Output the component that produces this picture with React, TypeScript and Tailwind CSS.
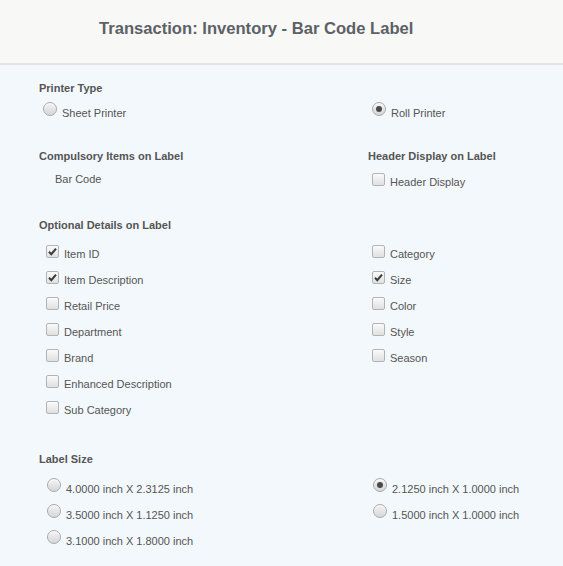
import React from 'react'

function Radio({ checked }: { checked?: boolean }) {
  return (
    <span className="flex h-[14px] w-[14px] shrink-0 items-center justify-center rounded-full border border-[#a9a9a9] bg-gradient-to-b from-[#f4f4f4] to-[#d6d6d6] shadow-[inset_0_1px_1px_rgba(255,255,255,0.8)]">
      {checked && <span className="h-[6px] w-[6px] rounded-full bg-[#4a4a4a]" />}
    </span>
  )
}

function Check({ checked }: { checked?: boolean }) {
  return (
    <span className="flex h-[13px] w-[13px] shrink-0 items-center justify-center rounded-[2px] border border-[#b3b3b3] bg-gradient-to-b from-[#fafafa] to-[#e0e0e0]">
      {checked && (
        <svg width="9" height="9" viewBox="0 0 9 9">
          <path d="M1 4.8 L3.3 7.2 L8 1.6" fill="none" stroke="#3a3a3a" strokeWidth="2" />
        </svg>
      )}
    </span>
  )
}

function Heading({ children }: { children: React.ReactNode }) {
  return <div className="text-[11px] font-bold leading-[13px] text-[#555]">{children}</div>
}

function RadioRow({ label, checked, indent }: { label: string; checked?: boolean; indent: string }) {
  return (
    <div className={`flex h-[26px] items-start ${indent}`}>
      <Radio checked={checked} />
      <span className="ml-[5px] mt-[5px] text-[11px] leading-[13px] text-[#555]">{label}</span>
    </div>
  )
}

function CheckRow({ label, checked, indent }: { label: string; checked?: boolean; indent: string }) {
  return (
    <div className={`flex h-[26px] items-start ${indent}`}>
      <Check checked={checked} />
      <span className="ml-[5px] mt-[3px] text-[11px] leading-[13px] text-[#555]">{label}</span>
    </div>
  )
}

const leftOptional = [
  { label: 'Item ID', checked: true },
  { label: 'Item Description', checked: true },
  { label: 'Retail Price' },
  { label: 'Department' },
  { label: 'Brand' },
  { label: 'Enhanced Description' },
  { label: 'Sub Category' },
]

const rightOptional = [
  { label: 'Category' },
  { label: 'Size', checked: true },
  { label: 'Color' },
  { label: 'Style' },
  { label: 'Season' },
]

export default function App() {
  return (
    <div className="min-h-[566px] w-[563px] bg-[#f3f8fc] font-['Liberation_Sans',Arial,sans-serif]">
      <header className="flex h-[65px] items-start border-b-2 border-[#e4e4e2] bg-[#f8f8f6] pl-[99px] pt-[19px]">
        <h1 className="text-[16.6px] font-bold leading-[20px] text-[#5c6167]">
          Transaction: Inventory - Bar Code Label
        </h1>
      </header>

      <main className="pl-[39px] pt-[17px]">
        {/* Printer Type */}
        <div className="grid grid-cols-[329px_1fr]">
          <div>
            <Heading>Printer Type</Heading>
            <div className="mt-[7px]">
              <RadioRow label="Sheet Printer" indent="ml-[4px]" />
            </div>
          </div>
          <div className="pt-[20px]">
            <RadioRow label="Roll Printer" checked indent="ml-[4px]" />
          </div>
        </div>

        {/* Compulsory / Header */}
        <div className="mt-[22px] grid grid-cols-[329px_1fr]">
          <div>
            <Heading>Compulsory Items on Label</Heading>
            <div className="ml-[16px] mt-[10px] text-[11px] leading-[13px] text-[#555]">Bar Code</div>
          </div>
          <div>
            <Heading>Header Display on Label</Heading>
            <div className="mt-[10px]">
              <CheckRow label="Header Display" indent="ml-[4px]" />
            </div>
          </div>
        </div>

        {/* Optional */}
        <div className="mt-[20px]">
          <Heading>Optional Details on Label</Heading>
          <div className="mt-[13px] grid grid-cols-[329px_1fr]">
            <div>
              {leftOptional.map((o) => (
                <CheckRow key={o.label} label={o.label} checked={o.checked} indent="ml-[7px]" />
              ))}
            </div>
            <div>
              {rightOptional.map((o) => (
                <CheckRow key={o.label} label={o.label} checked={o.checked} indent="ml-[4px]" />
              ))}
            </div>
          </div>
        </div>

        {/* Label Size */}
        <div className="mt-[26px]">
          <Heading>Label Size</Heading>
          <div className="mt-[12px] grid grid-cols-[329px_1fr]">
            <div>
              <RadioRow label="4.0000 inch X 2.3125 inch" indent="ml-[8px]" />
              <RadioRow label="3.5000 inch X 1.1250 inch" indent="ml-[8px]" />
              <RadioRow label="3.1000 inch X 1.8000 inch" indent="ml-[8px]" />
            </div>
            <div>
              <RadioRow label="2.1250 inch X 1.0000 inch" checked indent="ml-[5px]" />
              <RadioRow label="1.5000 inch X 1.0000 inch" indent="ml-[5px]" />
            </div>
          </div>
        </div>
      </main>
    </div>
  )
}
